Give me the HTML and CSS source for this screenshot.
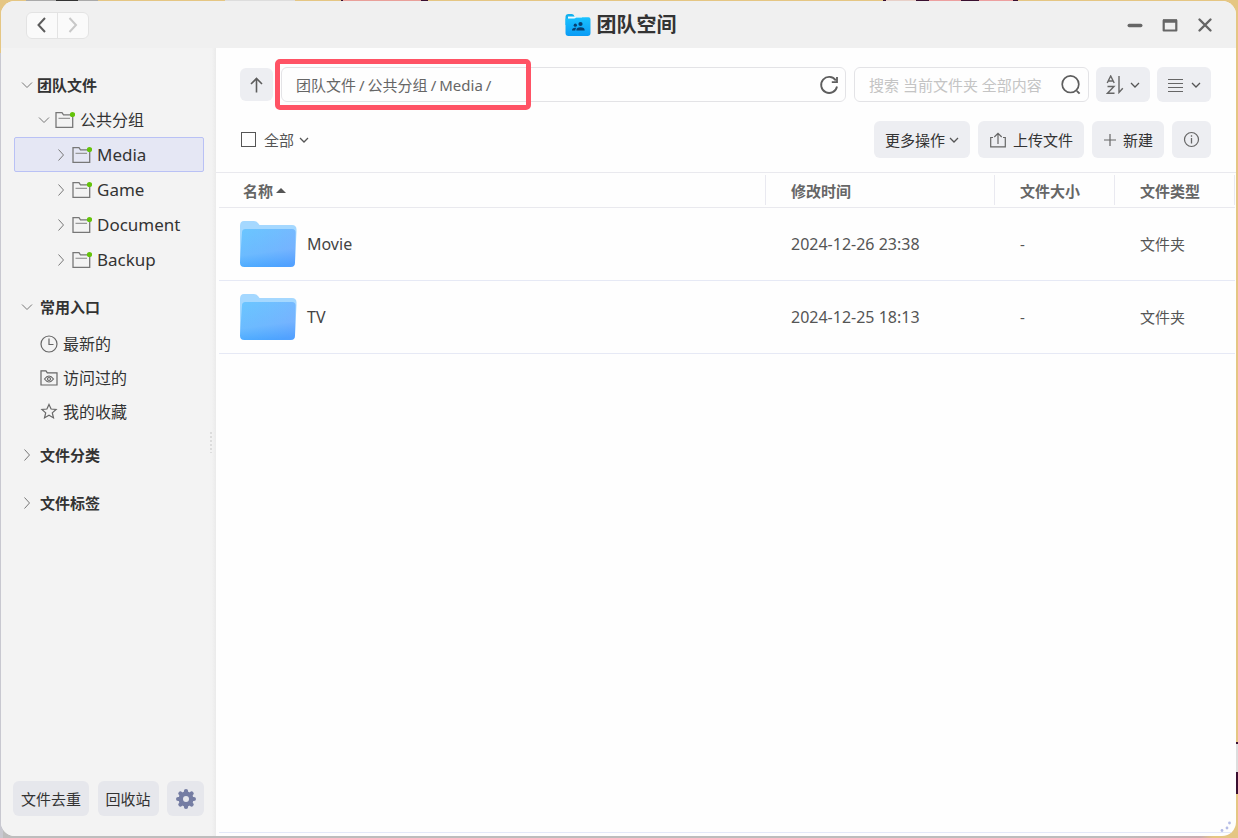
FILE: index.html
```html
<!DOCTYPE html>
<html lang="zh-CN">
<head>
<meta charset="utf-8">
<title>团队空间</title>
<link rel="stylesheet" href="styles.css">
</head>
<body>
<svg class="defs" aria-hidden="true">
  <defs>
    <linearGradient id="folder-face" x1="0.4" y1="0" x2="0.6" y2="1">
      <stop offset="0" stop-color="#73c6ff"/><stop offset="0.6" stop-color="#74baff"/><stop offset="1" stop-color="#43a0ff"/>
    </linearGradient>
    <linearGradient id="folder-tint" x1="0" y1="0" x2="1" y2="0">
      <stop offset="0" stop-color="#48c0ff" stop-opacity="0.2"/><stop offset="1" stop-color="#7aa0ff" stop-opacity="0.3"/>
    </linearGradient>
    <linearGradient id="logo-face" x1="0" y1="0" x2="0" y2="1">
      <stop offset="0" stop-color="#19c2ff"/><stop offset="1" stop-color="#0a9bf5"/>
    </linearGradient>
  </defs>
  <symbol id="i-down" viewBox="0 0 12 12"><path d="M1 3.500l5 5 5-5" fill="none" stroke="currentColor"/></symbol>
  <symbol id="i-right" viewBox="0 0 12 12"><path d="M3.500 .5l5 5.500-5 5.500" fill="none" stroke="currentColor"/></symbol>
  <symbol id="i-caret" viewBox="0 0 10 10"><path d="M1 3l4 4 4-4" fill="none" stroke="currentColor" stroke-width="1.300"/></symbol>
  <symbol id="i-group" viewBox="0 0 20 18"><path d="M1 16.300V1.700h6l1.500 2.100H17.700v12.500z" fill="none" stroke="#777" stroke-width="1.300"/><path d="M3.500 7.300h11.500" stroke="#999" stroke-width="1.200"/><circle cx="17.500" cy="3.500" r="2.600" fill="#64c30a"/></symbol>
  <symbol id="i-folder" viewBox="0 0 58 48">
    <path d="M1 6Q1 1 5 1H15Q17.500 1 19 3L20.500 5H53Q57.500 5 57.500 9.500V12L56 42H2Q1 42 1 40z" fill="#a5d8ff"/>
    <path d="M3 12.500Q3 9 6.500 9H53Q56.500 9 56.500 12.500L56 42.500Q56 47 51.500 47H5.500Q1 47 1 42.500z" fill="url(#folder-face)"/>
    <path d="M3 12.500Q3 9 6.500 9H53Q56.500 9 56.500 12.500L56 42.500Q56 47 51.500 47H5.500Q1 47 1 42.500z" fill="url(#folder-tint)"/>
  </symbol>
</svg>
<div class="window">
  <header class="titlebar">
    <div class="history">
      <button aria-label="后退"><svg width="12" height="18" viewBox="0 0 12 18"><path d="M9 2L2.500 9 9 16" fill="none" stroke="#5c5c5c" stroke-width="2"/></svg></button>
      <button aria-label="前进" disabled><svg width="12" height="18" viewBox="0 0 12 18"><path d="M2.500 2L9 9l-6.500 7" fill="none" stroke="#c8c8c8" stroke-width="2"/></svg></button>
    </div>
    <h1 class="title">
      <svg width="26" height="24" viewBox="0 0 26 24"><path d="M.5 4Q.5 1 3.500 1H7q2 0 2.500 2.500V12H.5z" fill="#12b0ee"/><path d="M3 4h17v4H3z" fill="#fff"/><path d="M.5 5.500h8.500q1.500 0 2-1.300h12.500q2 0 2 2V20q0 3-3 3H3.500q-3 0-3-3V5.500z" fill="url(#logo-face)"/><path d="M3 4h14" stroke="#dff6ff"/><circle cx="15.500" cy="11" r="2.100" fill="#073f70"/><circle cx="10.300" cy="12.200" r="1.600" fill="#073f70"/><path d="M11.300 17.500q0-3.300 4.200-3.300t4.200 3.300zM7 17.500q0-2.800 3.300-2.800h1q-1 1-1 2.800z" fill="#073f70"/></svg>
      <span>团队空间</span>
    </h1>
    <div class="controls">
      <button aria-label="最小化"><svg width="16" height="16" viewBox="0 0 16 16"><path d="M2.200 8.500h11.600" stroke="#666" stroke-width="3.400" stroke-linecap="round"/></svg></button>
      <button aria-label="最大化"><svg width="16" height="16" viewBox="0 0 16 16"><path d="M1.700 3.500h12.600v10H1.700z" fill="none" stroke="#666" stroke-width="2.200" stroke-linejoin="round"/><path d="M1 4h14" stroke="#666" stroke-width="3.400"/></svg></button>
      <button aria-label="关闭"><svg width="16" height="16" viewBox="0 0 16 16"><path d="M2.500 2.500l11 11m0-11l-11 11" stroke="#666" stroke-width="2.400" stroke-linecap="round"/></svg></button>
    </div>
  </header>
  <div class="body">
    <aside class="sidebar">
      <nav class="tree">
        <button class="node head head-root"><svg class="chev"><use href="#i-down"/></svg>团队文件</button>
        <button class="node level-1"><svg class="chev"><use href="#i-down"/></svg><svg class="group"><use href="#i-group"/></svg>公共分组</button>
        <button class="node level-2 selected"><svg class="chev"><use href="#i-right"/></svg><svg class="group"><use href="#i-group"/></svg>Media</button>
        <button class="node level-2"><svg class="chev"><use href="#i-right"/></svg><svg class="group"><use href="#i-group"/></svg>Game</button>
        <button class="node level-2"><svg class="chev"><use href="#i-right"/></svg><svg class="group"><use href="#i-group"/></svg>Document</button>
        <button class="node level-2"><svg class="chev"><use href="#i-right"/></svg><svg class="group"><use href="#i-group"/></svg>Backup</button>
        <button class="node head section"><svg class="chev"><use href="#i-down"/></svg>常用入口</button>
        <div class="entries">
          <button class="node entry"><svg class="ico" viewBox="0 0 18 18"><circle cx="9" cy="9" r="8" fill="none" stroke="#666" stroke-width="1.200"/><path d="M9 3.500V9.500h4.500" fill="none" stroke="#666" stroke-width="1.200"/></svg>最新的</button>
          <button class="node entry"><svg class="ico" viewBox="0 0 18 18"><path d="M1 16V1.800h5l1.300 2H17V16z" fill="none" stroke="#666" stroke-width="1.200"/><path d="M4.500 10q4.500-6 9 0-4.500 6-9 0z" fill="none" stroke="#666" stroke-width="1.200"/><circle cx="9" cy="10" r="1.500" fill="none" stroke="#666" stroke-width="1.200"/></svg>访问过的</button>
          <button class="node entry"><svg class="ico" viewBox="0 0 18 18"><path d="M9 1.500l2.100 4.500 5 .5-3.800 3.400 1.200 5L9 12.300l-4.500 2.600 1.200-5L1.900 6.500l5-.5z" fill="none" stroke="#666" stroke-width="1.200"/></svg>我的收藏</button>
        </div>
        <button class="node head section section-tight"><svg class="chev"><use href="#i-right"/></svg>文件分类</button>
        <button class="node head section-last"><svg class="chev"><use href="#i-right"/></svg>文件标签</button>
      </nav>
      <div class="grip"></div>
      <footer class="side-actions">
        <button class="btn side-btn">文件去重</button>
        <button class="btn side-btn">回收站</button>
        <button class="btn side-btn gear" aria-label="设置"><svg width="20" height="20" viewBox="-10 -10 20 20"><g stroke="#757da3" stroke-width="4.200" stroke-linecap="round"><path d="M0-7.900V7.900M-7.900 0H7.900M-5.600-5.600L5.600 5.600M5.600-5.600L-5.600 5.600"/></g><circle r="7.500" fill="#757da3"/><circle r="3" fill="#e6e7ec"/></svg></button>
      </footer>
    </aside>
    <main class="main">
      <div class="toolbar">
        <button class="btn up" aria-label="上一级"><svg width="17" height="18" viewBox="0 0 17 18"><path d="M8.500 16.500V2.500M3 8L8.500 2.500 14 8" fill="none" stroke="#5c5c5c" stroke-width="1.600"/></svg></button>
        <div class="path">
          <a href="#">团队文件</a><span>/</span><a href="#">公共分组</a><span>/</span><a href="#">Media</a><span>/</span>
          <button class="refresh" aria-label="刷新"><svg width="20" height="20" viewBox="0 0 20 20"><path d="M16.800 5.500A8 8 0 1 0 18 11.500" fill="none" stroke="#5e5e5e" stroke-width="1.800"/><path d="M18 2v5.200h-5.200" fill="none" stroke="#5e5e5e" stroke-width="1.800"/></svg></button>
          <div class="highlight"></div>
        </div>
        <div class="search">
          <input type="text" aria-label="搜索" placeholder="搜索 当前文件夹 全部内容">
          <button aria-label="搜索"><svg width="20" height="20" viewBox="0 0 20 20"><circle cx="9.500" cy="9.200" r="8.300" fill="none" stroke="#5e5e5e" stroke-width="1.700"/><path d="M15.800 15.800l2.800 2.800" stroke="#5e5e5e" stroke-width="1.900"/></svg></button>
        </div>
        <div class="drops">
          <button class="btn drop" aria-label="排序"><svg width="18" height="20" viewBox="0 0 18 20"><path d="M1.200 8L4.700 1 8.200 8M2.400 6h4.600M1.500 11.500h6.500L1.500 18.300h7M13 1v16.500l3.800-4.300" fill="none" stroke="#666" stroke-width="1.400"/></svg><svg class="caret"><use href="#i-caret"/></svg></button>
          <button class="btn drop" aria-label="视图"><svg width="18" height="20" viewBox="0 0 18 20"><path d="M1 4.500h15M1 8.500h15M1 12.500h15M1 16.500h15" stroke="#666" stroke-width="1.200"/></svg><svg class="caret"><use href="#i-caret"/></svg></button>
        </div>
      </div>
      <div class="actions">
        <input class="check" type="checkbox" id="all">
        <label for="all">全部</label>
        <button class="plain" aria-label="选择范围"><svg class="caret"><use href="#i-caret"/></svg></button>
        <span class="fill"></span>
        <button class="btn act more">更多操作<svg class="caret"><use href="#i-caret"/></svg></button>
        <button class="btn act"><svg width="18" height="16" viewBox="0 0 18 16"><path d="M4 5.500H1.700v9.300h14.600V5.500H14M9 12V1.500M5.300 5L9 1.300 12.700 5" fill="none" stroke="#666" stroke-width="1.200"/></svg>上传文件</button>
        <button class="btn act"><svg width="14" height="14" viewBox="0 0 14 14"><path d="M7 1v12M1 7h12" stroke="#666" stroke-width="1.200"/></svg>新建</button>
        <button class="btn act" aria-label="详细信息"><svg width="17" height="17" viewBox="0 0 17 17"><circle cx="8.500" cy="8.500" r="7" fill="none" stroke="#666" stroke-width="1.200"/><path d="M8.500 7v5.500M8.500 4.200v1.500" stroke="#666" stroke-width="1.300"/></svg></button>
      </div>
      <table class="files">
        <colgroup><col><col class="c-time"><col class="c-size"><col class="c-type"></colgroup>
        <thead><tr>
          <th scope="col"><span class="th">名称<i class="sort"></i></span></th>
          <th scope="col"><span class="th">修改时间</span></th>
          <th scope="col"><span class="th">文件大小</span></th>
          <th scope="col"><span class="th">文件类型</span></th>
        </tr></thead>
        <tbody>
          <tr><td><div class="file"><svg class="folder"><use href="#i-folder"/></svg>Movie</div></td><td class="date">2024-12-26 23:38</td><td>-</td><td>文件夹</td></tr>
          <tr><td><div class="file"><svg class="folder"><use href="#i-folder"/></svg>TV</div></td><td class="date">2024-12-25 18:13</td><td>-</td><td>文件夹</td></tr>
        </tbody>
      </table>
      <div class="status"></div>
      <svg class="resize" width="14" height="12" viewBox="0 0 14 12"><g fill="#b4bce6"><circle cx="10.500" cy="2" r="1.400"/><circle cx="8" cy="7" r="1.400"/><circle cx="3" cy="9.500" r="1.400"/></g></svg>
    </main>
  </div>
</div>
</body>
</html>
```

FILE: styles.css
```css
* { box-sizing: border-box; }

body {
  margin: 0;
  height: 100vh;
  padding: 1px 2px 2px 1px;
  background:
    linear-gradient(90deg, #aaa 30px, #333 30px 52px, #aaa 52px) 26px 0 / 72px 1px no-repeat,
    linear-gradient(#ddd, #ddd) 225px 0 / 70px 1px no-repeat,
    linear-gradient(90deg, #3a1030 2px, #e9a09a 2px 80px, #3a1030 80px) 341px 0 / 87px 1px no-repeat,
    linear-gradient(90deg, #3a1030 3px, #e8d0c8 3px 33px, #3a1030 33px 46px, #eda0a0 46px 78px, #3a1030 78px 96px, #eda0a0 96px 130px, #3a1030 130px) 883px 0 / 135px 1px no-repeat,
    linear-gradient(#3a1030 2px, #ddd 2px 30px, #3a1030 30px) 100% 742px / 2px 52px no-repeat,
    linear-gradient(#c8c8d0, #c8c8d0) 0 53px / 3px 100% no-repeat,
    linear-gradient(90deg, #bdbdbd 90%, #c9aeb0 97%, #e5c683 98%) 0 100% / 100% 14px no-repeat,
    #e5c683;
  font-family: "Noto Sans", "Noto Sans CJK SC", sans-serif;
  font-size: 15px;
  line-height: 20px;
  color: #555;
}

button, input {
  font: inherit;
  color: inherit;
}

button {
  display: flex;
  align-items: center;
  justify-content: center;
  padding: 0;
  border: 0;
  background: none;
  white-space: nowrap;
}

svg { flex: none; display: block; }
.defs { position: absolute; width: 0; height: 0; }

.window {
  display: flex;
  flex-direction: column;
  height: 100%;
  overflow: hidden;
  border-radius: 14px;
  background: #fefefe;
}

/* Title bar */
.titlebar {
  display: grid;
  grid-template-columns: 1fr auto 1fr;
  align-items: center;
  height: 47px;
  padding: 1px 23px 0 25px;
  background: #f0f0f0;
}

.history {
  display: flex;
  width: 63px;
  height: 27px;
  border: 1px solid #e3e3e3;
  border-radius: 6px;
  background: #fafafa;
}
.history button { flex: 1; }
.history button + button { border-left: 1px solid #e3e3e3; }

.title {
  display: flex;
  align-items: center;
  gap: 6px;
  margin: 0;
  padding-left: 2px;
  font-size: 20px;
  line-height: 28px;
  color: #333;
}

.controls {
  display: flex;
  justify-content: flex-end;
  gap: 19px;
}

.body { display: flex; flex: 1; min-height: 0; }

/* Sidebar */
.sidebar {
  position: relative;
  display: flex;
  flex-direction: column;
  flex: none;
  width: 215px;
  padding: 19px 12px 20px;
  background: linear-gradient(90deg, #f3f3f3 98%, #ebebeb);
}

.tree { flex: 1; margin-left: 1px; }

.node {
  justify-content: flex-start;
  width: 100%;
  height: 35px;
  border: 1px solid transparent;
  border-radius: 2px;
  font-size: 16px;
  color: #333;
}
.head { padding-left: 6px; gap: 7px; font-size: 15px; font-weight: 700; }
.head-root { gap: 4px; }
.level-1 { padding-left: 23px; }
.level-2 { padding-left: 40px; font-size: 17px; }
.selected { border-color: #b9c1f5; background: #e5e7f4; }
.section { margin-top: 12px; }
.section-tight { margin-top: 8px; }
.section-last { margin-top: 13px; }
.entries { padding-top: 3px; }
.entry { height: 34px; padding-left: 25px; gap: 5px; }

.chev { width: 12px; height: 12px; color: #777; }
.group { width: 20px; height: 18px; margin: 0 5px; }
.ico { width: 18px; height: 18px; }

.grip {
  position: absolute;
  right: 4px;
  top: 384px;
  width: 2px;
  height: 21px;
  background: repeating-linear-gradient(#dcdcdc 0 2px, transparent 2px 4px);
}

.side-actions { display: flex; justify-content: space-between; }

.btn { height: 35px; border-radius: 6px; background: #edeef2; color: #333; }
.side-btn { padding: 0 8px; background: #e6e7ec; }
.gear { width: 37px; }

/* Main area */
.main {
  position: relative;
  display: flex;
  flex-direction: column;
  flex: 1;
  min-width: 0;
  padding-top: 19px;
}

.toolbar, .actions {
  display: flex;
  align-items: center;
  padding: 0 25px 0 24px;
}
.toolbar { gap: 8px; }
.up { width: 33px; height: 33px; }

.path {
  position: relative;
  display: flex;
  align-items: center;
  gap: 3px;
  flex: 1;
  height: 35px;
  padding: 0 6px 0 14px;
  border: 1px solid #e3e3e6;
  border-radius: 6px;
  color: #666;
}
.path a { color: inherit; text-decoration: none; }
.refresh { margin-left: auto; }

.highlight {
  position: absolute;
  left: -7px;
  top: -9px;
  width: 256px;
  height: 51px;
  border: 5px solid #ff5365;
  border-radius: 5px;
  pointer-events: none;
}

.search {
  display: flex;
  align-items: center;
  width: 235px;
  height: 35px;
  padding: 0 7px 0 14px;
  border: 1px solid #e3e3e6;
  border-radius: 6px;
}
.search input {
  flex: 1;
  min-width: 0;
  padding: 0;
  border: 0;
  outline: 0;
  background: none;
}
.search input::placeholder { color: #c4c4c4; opacity: 1; }

.drops { display: flex; gap: 7px; }
.drop { width: 54px; gap: 6px; }
.toolbar .drops { margin-left: -1px; }
.caret { width: 10px; height: 10px; color: #555; }

.actions { gap: 8px; padding-top: 19px; padding-bottom: 14px; }
.check {
  appearance: none;
  width: 15px;
  height: 15px;
  margin: 0 0 0 1px;
  border: 1px solid #555;
}
.plain { margin-left: -3px; }
.fill { flex: 1; }
.act { height: 37px; padding: 0 11px; gap: 6px; }
.more { gap: 4px; }

/* File list */
.files {
  width: 100%;
  table-layout: fixed;
  border-collapse: separate;
  border-spacing: 0;
  padding: 0 1px 0 3px;
  border-top: 1px solid #e9e9ee;
}
.c-time { width: 229px; }
.c-size, .c-type { width: 120px; }

.files th {
  height: 35px;
  padding: 2px 0;
  border-bottom: 1px solid #e9e9ee;
  text-align: left;
  color: #666;
}
.th {
  display: flex;
  align-items: center;
  gap: 3px;
  height: 30px;
  padding: 1px 0 0 25px;
  border-right: 1px solid #e9e9f0;
}
.files th:first-child .th { padding-left: 24px; }
.sort {
  border: 5px solid transparent;
  border-top: 0;
  border-bottom: 5px solid #555;
}
.files td { height: 73px; padding: 0 0 0 25px; border-bottom: 1px solid #e6e9f5; }
.files td:first-child { padding-left: 20px; }
.file { display: flex; align-items: center; gap: 10px; font-size: 16px; color: #444; }
.files .date { font-size: 16px; }
.folder { width: 58px; height: 48px; }

.status { height: 4px; margin: auto 0 0 3px; border-top: 1px solid #e3e8f8; }
.resize { position: absolute; right: 3px; bottom: 3px; }
```
